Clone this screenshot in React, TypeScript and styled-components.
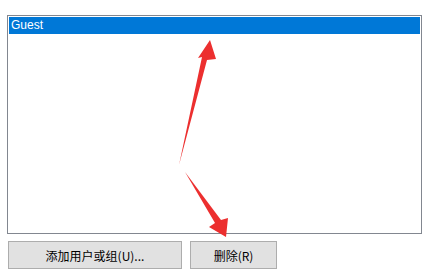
import React from 'react';
import styled, { createGlobalStyle } from 'styled-components';

const GlobalStyle = createGlobalStyle`
  html, body {
    margin: 0;
    padding: 0;
    background: #ffffff;
  }
  body {
    font-family: "Noto Sans CJK SC", "Liberation Sans", sans-serif;
  }
`;

const Page = styled.div`
  position: relative;
  width: 437px;
  height: 279px;
  padding: 15px 0 0 7px;
  box-sizing: border-box;
  display: flex;
  flex-direction: column;
  gap: 7px;
`;

const ListBox = styled.div`
  width: 415px;
  height: 219px;
  box-sizing: border-box;
  border: 1px solid #828790;
  padding: 1px;
  background: #ffffff;
`;

const ListItem = styled.div<{ $selected?: boolean }>`
  height: 17px;
  line-height: 17px;
  padding-left: 2px;
  font-family: "Liberation Sans", "Noto Sans", sans-serif;
  font-size: 12px;
  color: ${({ $selected }) => ($selected ? '#ffffff' : '#000000')};
  background: ${({ $selected }) => ($selected ? '#0078d7' : 'transparent')};
`;

const ButtonRow = styled.div`
  display: flex;
  gap: 8px;
  padding-left: 1px;
`;

const Button = styled.button<{ $width: number }>`
  width: ${({ $width }) => $width}px;
  height: 28px;
  box-sizing: border-box;
  border: 1px solid #adadad;
  background: #e1e1e1;
  color: #000000;
  font-family: "Noto Sans CJK SC", "Liberation Sans", sans-serif;
  font-size: 12px;
  padding: 0;
  cursor: default;
`;

const Overlay = styled.svg`
  position: absolute;
  left: 0;
  top: 0;
  pointer-events: none;
`;

const App: React.FC = () => {
  return (
    <>
      <GlobalStyle />
      <Page>
        <ListBox>
          <ListItem $selected>Guest</ListItem>
        </ListBox>
        <ButtonRow>
          <Button $width={174}>添加用户或组(U)...</Button>
          <Button $width={87}>删除(R)</Button>
        </ButtonRow>
        <Overlay width={437} height={279} viewBox="0 0 437 279">
          <polygon points="179,165 202,57 198,58 210,40 216,59 207,60" fill="#ec2f2f" />
          <polygon points="185,172 215,223 209,227 226,237 228,218 221,220" fill="#ec2f2f" />
        </Overlay>
      </Page>
    </>
  );
};

export default App;
